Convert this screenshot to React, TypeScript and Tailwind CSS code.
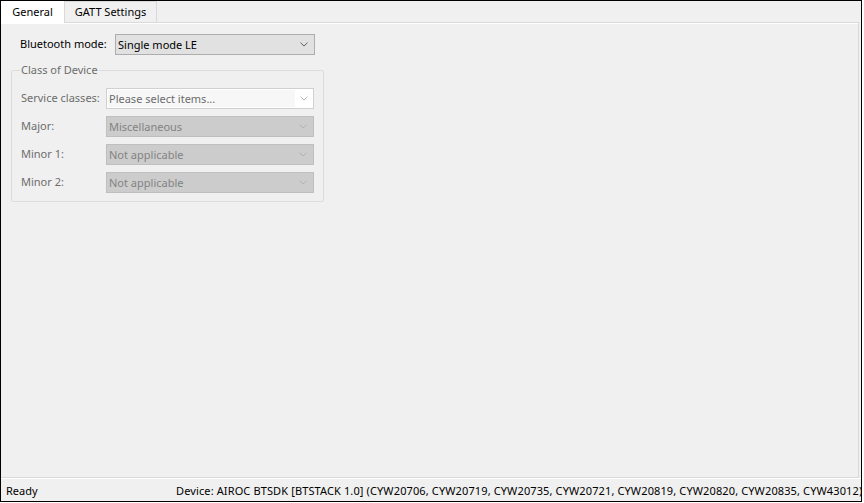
import React from "react";

const font = { fontFamily: '"Noto Sans", "Open Sans", sans-serif' };

function Chevron({ color }: { color: string }) {
  return (
    <svg width="8" height="5" viewBox="0 0 8 5" className="shrink-0">
      <path d="M0.5 0.7 L4 4 L7.5 0.7" fill="none" stroke={color} strokeWidth="1" />
    </svg>
  );
}

function DisabledCombo({ text }: { text: string }) {
  return (
    <div className="w-[208px] h-[21px] bg-[#cccccc] border border-[#bfbfbf] flex items-center pl-[2px] pr-[6px] justify-between">
      <span className="text-[#838383] leading-none">{text}</span>
      <Chevron color="#b3b3b3" />
    </div>
  );
}

export default function App() {
  return (
    <div className="w-[864px] h-[503px] bg-white text-[11px] text-black" style={font}>
      <div className="w-[862px] h-[502px] border border-black bg-[#f0f0f0] flex flex-col">
        {/* Tab strip */}
        <div className="h-[21px] flex items-stretch shrink-0 relative z-10">
          <div className="w-[64px] h-[22px] bg-white border-r border-[#d9d9d9] flex items-center justify-center">
            <span className="pt-[1px]">General</span>
          </div>
          <div className="w-[92px] h-[21px] bg-[#f0f0f0] border-t border-r border-[#d9d9d9] flex items-center justify-center">
            <span className="pt-[1px]">GATT Settings</span>
          </div>
        </div>
        {/* Panel */}
        <div className="flex-1 mr-[2px] border-t border-r border-b border-[#d9d9d9] shadow-[inset_0_1px_0_#ffffff] px-[10px] pt-[11px] flex flex-col">
          <div className="flex items-center ml-[9px]">
            <span className="w-[95px]">Bluetooth mode:</span>
            <div className="w-[200px] h-[21px] bg-[#e1e1e1] border border-[#adadad] flex items-center justify-between pl-[2px] pr-[6px]">
              <span className="leading-none">Single mode LE</span>
              <Chevron color="#606060" />
            </div>
          </div>
          <fieldset className="mt-[7px] w-[313px] border border-[#dcdcdc] rounded-[2px] px-[9px] pb-[8px]">
            <legend className="px-[1px] ml-[-1px] text-[#6d6d6d] leading-[16px]">Class of Device</legend>
            <div className="mt-[10px] flex flex-col gap-[7px]">
              <div className="flex items-center">
                <span className="w-[85px] text-[#6d6d6d]">Service classes:</span>
                <div className="w-[208px] h-[21px] bg-white border border-[#d0d0d0] flex items-center p-[1px]">
                  <div className="w-[187px] h-full bg-[#f7f7f7] flex items-center pl-[1px]">
                    <span className="text-[#6d6d6d] leading-none">Please select items...</span>
                  </div>
                  <div className="flex-1 flex items-center justify-center pl-[1px]">
                    <Chevron color="#b3b3b3" />
                  </div>
                </div>
              </div>
              <div className="flex items-center">
                <span className="w-[85px] text-[#6d6d6d]">Major:</span>
                <DisabledCombo text="Miscellaneous" />
              </div>
              <div className="flex items-center">
                <span className="w-[85px] text-[#6d6d6d]">Minor 1:</span>
                <DisabledCombo text="Not applicable" />
              </div>
              <div className="flex items-center">
                <span className="w-[85px] text-[#6d6d6d]">Minor 2:</span>
                <DisabledCombo text="Not applicable" />
              </div>
            </div>
          </fieldset>
        </div>
        {/* Status bar */}
        <div className="h-[23px] shrink-0 shadow-[inset_0_1px_0_#ffffff] flex items-center pt-[4px] overflow-hidden">
          <span className="w-[175px] pl-[5px] shrink-0">Ready</span>
          <span className="whitespace-nowrap tracking-[0.12px]">
            Device: AIROC BTSDK [BTSTACK 1.0] (CYW20706, CYW20719, CYW20735, CYW20721, CYW20819, CYW20820, CYW20835, CYW43012)
          </span>
        </div>
      </div>
    </div>
  );
}
